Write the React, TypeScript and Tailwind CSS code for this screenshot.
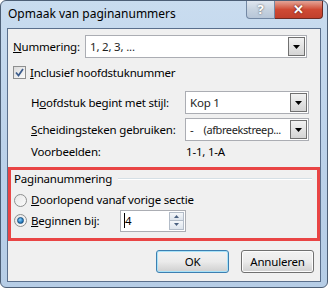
import React from "react";

function DownArrow() {
  return (
    <svg width="7" height="4" viewBox="0 0 7 4">
      <path d="M0 0h7L3.5 4z" fill="#000" />
    </svg>
  );
}

function Combo({ children, className }: { children: React.ReactNode; className: string }) {
  return (
    <div className={`flex h-[23px] items-center border border-[#abadb3] bg-white ${className}`}>
      <div className="flex-1 whitespace-nowrap pl-[4px] text-[#1e1e1e]">{children}</div>
      <div className="mr-[1px] flex h-[19px] w-[17px] shrink-0 items-center justify-center border border-[#707070] bg-gradient-to-b from-[#f2f2f2] to-[#d4d4d4]">
        <DownArrow />
      </div>
    </div>
  );
}

function Radio({ checked }: { checked?: boolean }) {
  return (
    <div className="flex h-[13px] w-[13px] shrink-0 items-center justify-center rounded-full border border-[#8e8f8f] bg-gradient-to-br from-[#e6e6e6] to-[#fbfbfb]">
      {checked && (
        <div className="h-[7px] w-[7px] rounded-full border border-[#1c5180] bg-[radial-gradient(circle_at_40%_35%,#8ad3ff,#2a7fc2_60%,#1b4f80)]" />
      )}
    </div>
  );
}

export default function App() {
  return (
    <div className="h-[288px] w-[328px] overflow-hidden bg-white font-['Segoe_UI','Noto_Sans',sans-serif] text-[11.5px] leading-none tracking-[-0.2px] text-black">
      <div className="flex h-[288px] w-[328px] flex-col rounded-[6px] border border-[#4d5f76] bg-gradient-to-b from-[#c9dcef] via-[#bcd2ea] to-[#b6cde6]">
        {/* title bar */}
        <div className="flex h-[27px] shrink-0 items-start justify-between">
          <div className="pl-[7px] pt-[7px] text-[12px] tracking-normal text-black">Opmaak van paginanummers</div>
          <div className="mr-[4px] flex">
            <div className="flex h-[18px] w-[29px] items-center justify-center rounded-bl-[4px] border border-t-0 border-[#7388a4] bg-gradient-to-b from-[#dfe6ef] via-[#c7d3e0] to-[#b7c6d8] text-[13px] font-bold text-white [text-shadow:0_0_2px_#444]">
              ?
            </div>
            <div className="flex h-[18px] w-[48px] items-center justify-center rounded-br-[4px] border border-l-0 border-t-0 border-[#6e2a22] bg-gradient-to-b from-[#e3a497] via-[#cf4a34] to-[#c1402c] text-[13px] font-bold text-white [text-shadow:0_0_2px_#401010]">
              ✕
            </div>
          </div>
        </div>

        {/* client area */}
        <div className="mx-[6px] flex h-[254px] flex-col border border-[#5a6f8c] bg-[#f0f0f0]">
          <div className="flex items-center pl-[5px] pt-[6px]">
            <div className="w-[72px]">
              <span className="underline">N</span>ummering:
            </div>
            <Combo className="w-[222px]">1, 2, 3, ...</Combo>
          </div>

          <div className="mt-[8px] flex items-center pl-[5px]">
            <div className="flex h-[13px] w-[13px] items-center justify-center border border-[#8e8f8f] bg-gradient-to-br from-[#dcdcdc] to-[#fbfbfb]">
              <svg width="9" height="9" viewBox="0 0 9 9">
                <path d="M1 4.5l2.5 3L8 1" stroke="#3c5c8c" strokeWidth="1.7" fill="none" />
              </svg>
            </div>
            <div className="pl-[4px]">
              <span className="underline">I</span>nclusief hoofdstuknummer
            </div>
          </div>

          <div className="mt-[12px] flex items-center pl-[23px]">
            <div className="w-[154px] whitespace-nowrap">
              H<span className="underline">o</span>ofdstuk begint met stijl:
            </div>
            <Combo className="w-[124px]">Kop 1</Combo>
          </div>

          <div className="mt-[4px] flex items-center pl-[23px]">
            <div className="w-[154px] whitespace-nowrap">
              <span className="underline">S</span>cheidingsteken gebruiken:
            </div>
            <Combo className="w-[124px]">
              <span className="pr-[10px]">-</span>
              <span className="text-[11px] tracking-[-0.4px]">(afbreekstreep...</span>
            </Combo>
          </div>

          <div className="mt-[3px] flex h-[15px] items-center pl-[23px]">
            <div className="w-[154px]">Voorbeelden:</div>
            <div className="pl-[1px]">1-1, 1-A</div>
          </div>

          {/* Paginanummering group, highlighted */}
          <div className="mt-[8px] h-[74px] border-[3px] border-[#e94545]">
            <div className="flex items-center pl-[3px] pt-[3px]">
              <div>Paginanummering</div>
              <div className="ml-[6px] mr-[5px] h-[2px] flex-1 border-t border-b border-t-[#d5dfe5] border-b-white" />
            </div>
            <div className="mt-[9px] flex items-center pl-[3px]">
              <Radio />
              <div className="pl-[4px]">
                <span className="underline">D</span>oorlopend vanaf vorige sectie
              </div>
            </div>
            <div className="mt-[3px] flex items-center pl-[3px]">
              <Radio checked />
              <div className="w-[93px] pl-[4px]">
                <span className="underline">B</span>eginnen bij:
              </div>
              <div className="flex h-[22px] w-[66px] items-center border border-[#abadb3] bg-white">
                <div className="flex-1 pl-[3px]">
                  <span className="border-l border-black">4</span>
                </div>
                <div className="mr-[1px] flex h-[18px] w-[15px] flex-col">
                  <div className="flex flex-1 items-center justify-center border border-[#b3bcc8] bg-gradient-to-b from-[#f5f7fa] to-[#dde4ec]">
                    <svg width="5" height="3" viewBox="0 0 5 3"><path d="M0 3h5L2.5 0z" fill="#4a6080" /></svg>
                  </div>
                  <div className="flex flex-1 items-center justify-center border border-t-0 border-[#b3bcc8] bg-gradient-to-b from-[#f5f7fa] to-[#dde4ec]">
                    <svg width="5" height="3" viewBox="0 0 5 3"><path d="M0 0h5L2.5 3z" fill="#4a6080" /></svg>
                  </div>
                </div>
              </div>
            </div>
          </div>

          {/* buttons */}
          <div className="mt-[9px] flex justify-end gap-[12px] pr-[6px]">
            <div className="flex h-[23px] w-[73px] items-center justify-center rounded-[3px] border border-[#3c7fb1] bg-gradient-to-b from-[#f2f2f2] via-[#ebebeb] to-[#cfcfcf] shadow-[inset_0_0_0_1px_#a8e2f8]">
              OK
            </div>
            <div className="flex h-[23px] w-[73px] items-center justify-center rounded-[3px] border border-[#707070] bg-gradient-to-b from-[#f2f2f2] via-[#ebebeb] to-[#cfcfcf] shadow-[inset_0_0_0_1px_#fcfcfc]">
              Annuleren
            </div>
          </div>
        </div>
      </div>
    </div>
  );
}
